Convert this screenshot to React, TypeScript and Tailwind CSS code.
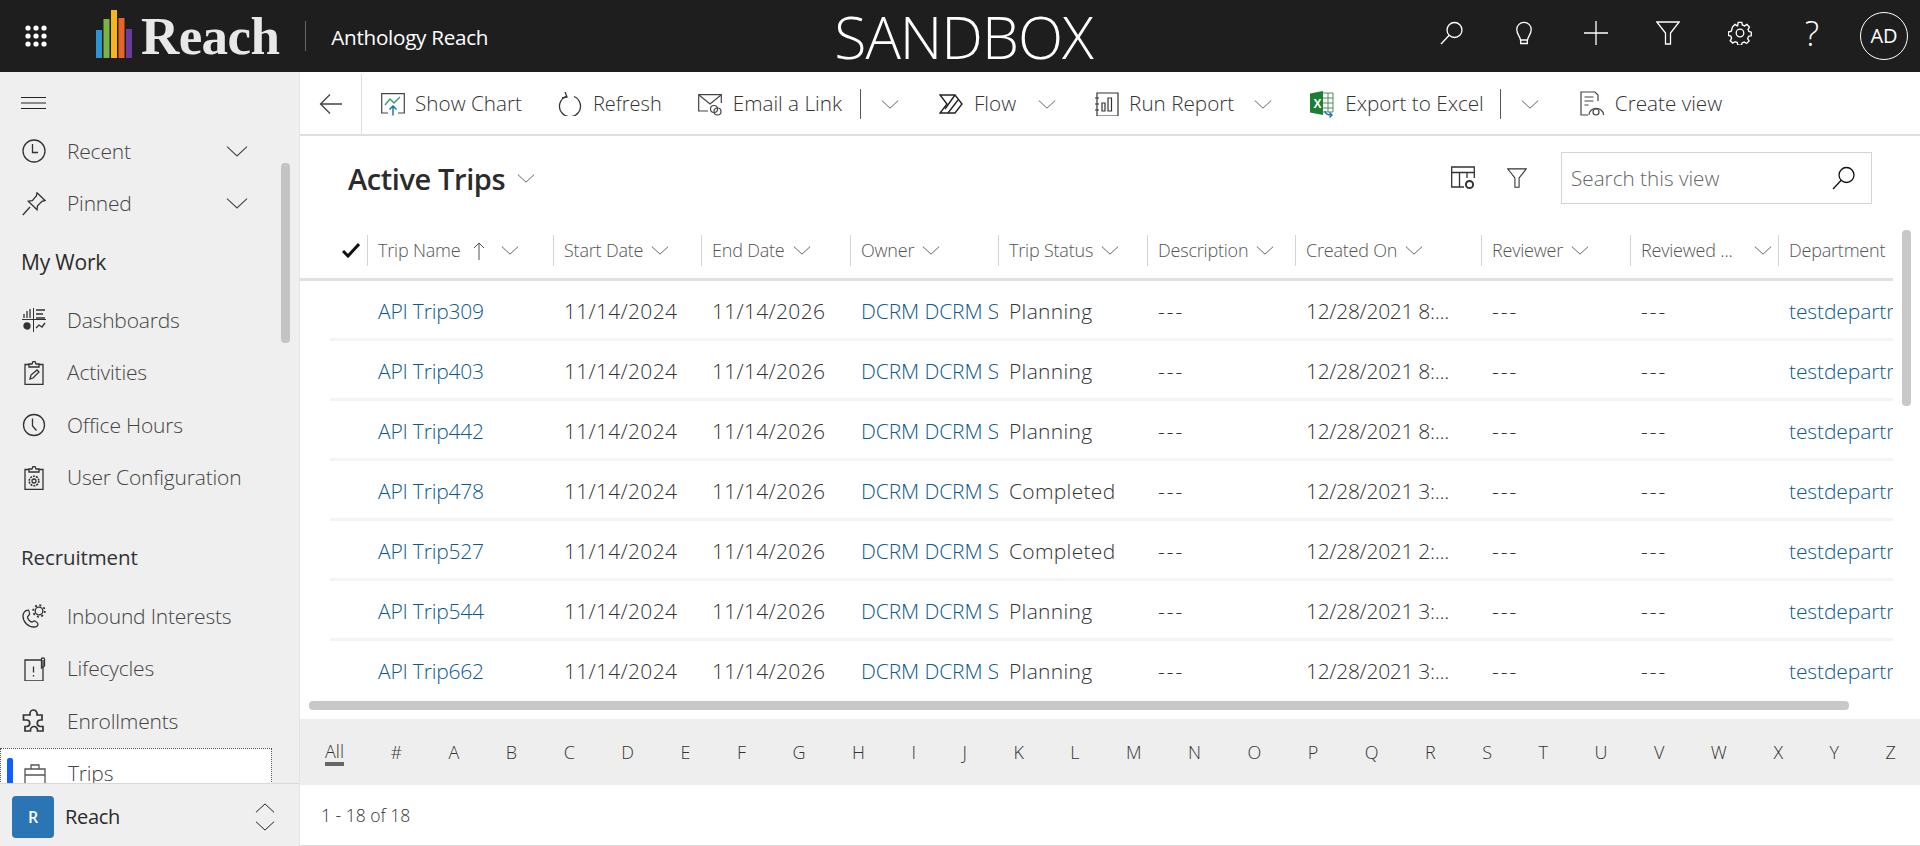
import type { ReactNode } from 'react';

const FONT = "font-['Open_Sans','Noto_Sans',sans-serif]";

type IconProps = { className?: string };

function Line({ size = 24, className, children }: { size?: number; className?: string; children: ReactNode }) {
  return (
    <svg
      width={size}
      height={size}
      viewBox="0 0 24 24"
      fill="none"
      stroke="currentColor"
      strokeWidth={1.3}
      className={className}
    >
      {children}
    </svg>
  );
}

function Chevron({ className = '', w = 22 }: { className?: string; w?: number }) {
  return (
    <svg width={w} height={w / 2} viewBox="0 0 22 11" fill="none" stroke="currentColor" strokeWidth={1.1} className={className}>
      <path d="M1 .7 11 10 21 .7" />
    </svg>
  );
}

function Waffle() {
  const dots = [4, 12, 20];
  return (
    <svg width={24} height={24} viewBox="0 0 24 24" fill="#fff">
      {dots.map((y) => dots.map((x) => <circle key={`${x}-${y}`} cx={x} cy={y} r={2.6} />))}
    </svg>
  );
}

function LogoBars() {
  return (
    <svg width={36} height={48} viewBox="0 0 36 48">
      <rect x={0} y={20} width={6} height={28} fill="#2c94cf" />
      <rect x={7.5} y={9} width={6} height={39} fill="#78b543" />
      <rect x={15} y={0} width={6} height={48} fill="#f7b51d" />
      <rect x={22.5} y={8} width={6} height={40} fill="#ea6327" />
      <rect x={30} y={19} width={6} height={29} fill="#6b3d98" />
    </svg>
  );
}

const SearchIcon = ({ className }: IconProps) => (
  <Line className={className}>
    <circle cx={14.5} cy={9} r={7.5} />
    <path d="M9.2 14.3 1 23" />
  </Line>
);
const Bulb = () => (
  <Line>
    <path d="M8.5 19C8 15 4.8 13.5 4.8 8.5a7.2 7.2 0 0 1 14.4 0c0 5-3.2 6.5-3.7 10.5Z" />
    <path d="M8.7 19v3.5h6.6V19" />
  </Line>
);
const PlusIcon = () => (
  <Line>
    <path d="M12 0v24M0 12h24" />
  </Line>
);
const Funnel = ({ size = 24 }: { size?: number }) => (
  <Line size={size}>
    <path d="M.8 1h22.4L14.5 12v11h-5V12Z" />
  </Line>
);
const Gear = () => (
  <Line>
    <circle cx={12} cy={12} r={3.8} />
    <path d="M10 1h4l.6 3 2.500 1 2.600-1.600 2.800 2.800-1.600 2.600 1 2.400 2.600.8v4l-3 .6-1 2.500 1.600 2.600-2.800 2.800-2.600-1.600-2.400 1-.7 2.600h-4l-.6-3-2.500-1-2.600 1.600-2.800-2.800 1.600-2.600-1-2.400-2.600-.7v-4l3-.6 1-2.500L3.600 6.200 6.400 3.400 9 5l.4-.2Z" transform="translate(1.200 .4) scale(.9)" strokeWidth={1.5} />
  </Line>
);
const Back = () => (
  <Line>
    <path d="M23 12H2M11 2.500 1.500 12 11 21.500" />
  </Line>
);

const ShowChartIcon = () => (
  <svg width={24} height={24} viewBox="0 0 24 24" fill="none" strokeWidth={1.2}>
    <path d="M7 21H.7V1.700h22.600V21H17" stroke="#444" />
    <path d="M4 13 9 7l4 4 6-6" stroke="#2f9e6e" strokeWidth={1.4} />
    <path d="M12 23.500V14M8.500 17.500 12 14l3.500 3.500" stroke="#0f6cbd" strokeWidth={1.4} />
  </svg>
);
const RefreshIcon = () => (
  <Line>
    <path d="M8 4.500a10.500 10.500 0 1 0 8 0" />
    <path d="M7 0l2 5-5 1" />
  </Line>
);
const EmailIcon = () => (
  <svg width={24} height={24} viewBox="0 0 24 24" fill="none" stroke="#444" strokeWidth={1.2}>
    <path d="M10 19H.7V2.700h22.600V11" />
    <path d="M1 3l11 9 11-9" />
    <circle cx={16} cy={17} r={3.500} />
    <circle cx={19.500} cy={19.500} r={3.500} />
  </svg>
);
const FlowIcon = () => (
  <svg width={24} height={24} viewBox="0 0 24 24" fill="none" stroke="#222" strokeWidth={1.4}>
    <path d="M1 3h15l7 9-7 9H1l7-9Z" />
    <path d="M16 3 6 17M19 8 9 21" />
  </svg>
);
const ReportIcon = () => (
  <svg width={24} height={24} viewBox="0 0 24 24" fill="none" stroke="#333" strokeWidth={1.2}>
    <path d="M2 1h21v23H2z" />
    <path d="M7 11h3v8H7zM13 6h3.500v13H13z" />
    <path d="M0 6h4M0 12h4M0 18h4" />
  </svg>
);
const ExcelIcon = () => (
  <svg width={24} height={28} viewBox="0 0 24 28" fill="none">
    <path d="M0 3.500 13 1v24L0 22.500Z" fill="#1e7e34" />
    <path d="M13 3h10v19H13" fill="#fff" stroke="#4b8f5e" />
    <path d="M13 8h10M13 13h10M13 18h10M18 3v19" stroke="#4b8f5e" />
    <text x={3.500} y={18} fontSize={12} fontWeight={700} fill="#fff" fontFamily="Liberation Sans">X</text>
    <path d="M15 21c0 3 2 4 7 4m-2.500-2.500L22 25l-2.500 2.500" stroke="#1f6fb5" strokeWidth={1.4} />
  </svg>
);
const CreateViewIcon = () => (
  <svg width={24} height={26} viewBox="0 0 24 26" fill="none" stroke="#444" strokeWidth={1.2}>
    <path d="M8 24H1V1h14l3 3v6" />
    <path d="M4.500 6h9M4.500 10h9M4.500 14h4" />
    <path d="M9 24c.5-9 14-9 14.500 0" />
    <circle cx={16} cy={21} r={3} />
  </svg>
);
const ViewSettingsIcon = () => (
  <svg width={24} height={24} viewBox="0 0 24 24" fill="none" stroke="#333" strokeWidth={1.3}>
    <path d="M13 21H.7V1h22.600v11" />
    <path d="M1 6.500h22M8.500 6.500V21M16 6.500V12" />
    <circle cx={18.500} cy={18.500} r={3.600} strokeWidth={2} />
  </svg>
);

const ClockIcon = () => (
  <Line>
    <circle cx={12} cy={12} r={11} />
    <path d="M10.500 5v8.500H16" />
  </Line>
);
const OfficeClockIcon = () => (
  <Line>
    <circle cx={12} cy={12} r={10.500} />
    <path d="M10.500 5.500V13l4 4.500" />
  </Line>
);
const PinIcon = () => (
  <Line>
    <path d="M15 .8 23 8.500l-3 .8-4.500 4.500-.5 4-3-3-2.700-2.600-3-3 4-.6L14.300 4Z" />
    <path d="M8 15 .8 23" />
  </Line>
);
const DashboardIcon = () => (
  <Line>
    <path d="M11.500 0v24M0 11.500h24" strokeWidth={1} />
    <path d="M2 10V6M5 10V3M8 10V1M14 2h9M14 6h7M14 10h9" />
    <circle cx={5} cy={18} r={3} fill="currentColor" />
    <path d="M14 20l3-3 3 2 3-4" />
  </Line>
);
const ActivitiesIcon = () => (
  <Line>
    <path d="M7 3.500H3v20h18v-20h-4" />
    <path d="M7 6V3h3l1-2.500h2L14 3h3v3Z" />
    <path d="m8 18 1-4 6-5 2 2-6 6Z" />
  </Line>
);
const UserConfigIcon = () => (
  <Line>
    <path d="M7 3.500H3v20h18v-20h-4" />
    <path d="M7 6V3h3l1-2.500h2L14 3h3v3Z" />
    <circle cx={12} cy={15} r={2} />
    <circle cx={12} cy={15} r={4.800} strokeDasharray="2 1" strokeWidth={1.6} />
  </Line>
);
const InboundIcon = () => (
  <Line>
    <path d="M6.500 6C3 6 1 9 1 12c0 6 5 11 11 11 3 0 4-1.500 4-3 0-1-1.500-2-3-3-1.500-.5-2 1-3 1-2 0-4.500-3-4.500-5 0-1 2-1.500 2-3 0-1.500-.7-4-1.500-4Z" />
    <circle cx={17} cy={7} r={3.800} />
    <circle cx={17} cy={7} r={5.800} strokeDasharray="2 2.500" strokeWidth={1.8} />
  </Line>
);
const LifecyclesIcon = () => (
  <Line>
    <path d="M19 3H3v21h18V3" />
    <path d="M19.500 11V2c0-1.500 3-1.500 3 0v7Z" />
    <path d="M11.500 9.500v6M11.500 18v1.500" />
  </Line>
);
const PuzzleIcon = () => (
  <Line>
    <path
      strokeWidth={1.7}
      d="M8 4.500a3.500 3.500 0 0 1 7 0V6h5v5h-1.500a3 3 0 0 0 0 6.500H21V22h-5.500v-1a3.500 3.500 0 0 0-7 0v1H3v-4.500h1.500a3 3 0 0 0 0-6.500H1.500V6H8Z"
    />
  </Line>
);
const BriefcaseIcon = () => (
  <Line>
    <path d="M2 7h20v15H2zM2 13h20M8 7V3h8v4" />
  </Line>
);

const NAV_A = [
  { label: 'Dashboards', icon: <DashboardIcon /> },
  { label: 'Activities', icon: <ActivitiesIcon /> },
  { label: 'Office Hours', icon: <OfficeClockIcon /> },
  { label: 'User Configuration', icon: <UserConfigIcon /> },
];
const NAV_B = [
  { label: 'Inbound Interests', icon: <InboundIcon /> },
  { label: 'Lifecycles', icon: <LifecyclesIcon /> },
  { label: 'Enrollments', icon: <PuzzleIcon /> },
];

function NavItem({ icon, label, chevron }: { icon: ReactNode; label: string; chevron?: boolean }) {
  return (
    <div className="flex h-[52.5px] items-center pl-[22px] text-[#444]">
      <span className="flex w-[45px] shrink-0 text-[#333]">{icon}</span>
      <span className="text-[21px] font-light tracking-[-0.2px]">{label}</span>
      {chevron && <Chevron className="ml-auto mr-[50px] w-[24px]" />}
    </div>
  );
}

function Sidebar() {
  return (
    <aside className="relative flex w-[300px] shrink-0 flex-col overflow-hidden border-r border-[#e4e4e4] bg-[#efefef]">
      <div className="h-[711px] shrink-0 overflow-hidden">
        <div className="flex h-[53px] items-center pl-[21px] pt-[9px] text-[#222]">
          <svg width={25} height={12} viewBox="0 0 25 12" stroke="currentColor" strokeWidth={1}>
            <path d="M0 .5h25M0 6h25M0 11.500h25" />
          </svg>
        </div>
        <NavItem icon={<ClockIcon />} label="Recent" chevron />
        <NavItem icon={<PinIcon />} label="Pinned" chevron />
        <div className="flex h-[64px] items-center pl-[21px] pt-[1px] text-[21px] font-medium tracking-[-0.2px] text-[#2b2b2b]">My Work</div>
        {NAV_A.map((n) => (
          <NavItem key={n.label} {...n} />
        ))}
        <div className="flex h-[86px] items-start pl-[21px] pt-[40px] text-[20.5px] font-medium leading-[26px] tracking-[-0.1px] text-[#333]">
          Recruitment
        </div>
        {NAV_B.map((n) => (
          <NavItem key={n.label} {...n} />
        ))}
        <div className="relative flex h-[60px] w-[272px] items-start border border-dotted border-[#555] bg-white pl-[22px] pt-[11px] text-[#444]">
          <span className="absolute left-[6px] top-[9px] h-[40px] w-[6px] rounded-[2px] bg-[#0f5fff]" />
          <span className="mt-[2px] flex w-[45px] shrink-0 text-[#555]">
            <BriefcaseIcon />
          </span>
          <span className="text-[21px] font-light leading-[26px] tracking-[-0.2px]">Trips</span>
        </div>
      </div>
      <div className="flex h-[63px] shrink-0 items-center border-t border-[#d9d9d9] pl-[12px] pr-[24px] pt-[3px]">
        <span className="flex h-[42px] w-[42px] items-center justify-center rounded-[4px] bg-[#2b75b5] text-[16px] font-semibold text-white">
          R
        </span>
        <span className="ml-[11px] text-[20px] font-medium tracking-[-0.3px] text-[#2b2b2b]">Reach</span>
        <span className="ml-auto flex flex-col gap-[8px] text-[#222]">
          <Chevron className="rotate-180" w={20} />
          <Chevron w={20} />
        </span>
      </div>
      <span className="absolute left-[281px] top-[91px] h-[180px] w-[9px] rounded-[4px] bg-[#c4c4c4]" />
    </aside>
  );
}

function TopBar() {
  return (
    <header className="flex h-[72px] shrink-0 items-center bg-[#1e1e1e] text-white">
      <span className="ml-[24px] flex">
        <Waffle />
      </span>
      <span className="ml-[48px] mb-[4px] flex">
        <LogoBars />
      </span>
      <span className="ml-[9px] font-['Liberation_Serif',serif] text-[53px] font-bold leading-none tracking-[-0.6px] text-[#e8e8e8]">
        Reach
      </span>
      <span className="ml-[26px] h-[30px] w-px bg-[#666]" />
      <span className="ml-[25px] pt-[3px] text-[20.7px] tracking-[-0.3px]">Anthology Reach</span>
      <span className="ml-[346px] text-[59px] font-light leading-none tracking-[-1px]">SANDBOX</span>
      <div className="ml-auto flex items-center pr-[12px]">
        {[<SearchIcon key="s" />, <Bulb key="b" />, <PlusIcon key="p" />, <Funnel key="f" />, <Gear key="g" />].map((icon, i) => (
          <span key={i} className="flex h-[72px] w-[72px] items-center justify-center pb-[6px]">
            {icon}
          </span>
        ))}
        <span className="flex h-[72px] w-[72px] items-center justify-center pb-[6px] text-[34px] font-light leading-none">?</span>
        <span className="ml-[12px] flex h-[48px] w-[48px] items-center justify-center rounded-full border border-white text-[20px]">AD</span>
      </div>
    </header>
  );
}

function CmdLabel({ children }: { children: ReactNode }) {
  return <span className="text-[20.7px] font-light text-[#333]">{children}</span>;
}

function CommandBar() {
  return (
    <div className="flex h-[64px] shrink-0 items-center border-b-2 border-[#dedede] pt-[2px]">
      <div className="flex h-full w-[62px] shrink-0 items-center justify-center border-r border-[#dedede] text-[#444]">
        <Back />
      </div>
      <span className="ml-[19px] flex">
        <ShowChartIcon />
      </span>
      <span className="ml-[10px]">
        <CmdLabel>Show Chart</CmdLabel>
      </span>
      <span className="ml-[36px] flex text-[#333]">
        <RefreshIcon />
      </span>
      <span className="ml-[11px]">
        <span className="text-[20px] font-light text-[#333]">Refresh</span>
      </span>
      <span className="ml-[36px] flex">
        <EmailIcon />
      </span>
      <span className="ml-[11px]">
        <CmdLabel>Email a Link</CmdLabel>
      </span>
      <span className="ml-[18px] h-[30px] w-px bg-[#555]" />
      <Chevron className="ml-[20px] text-[#555]" w={18} />
      <span className="ml-[40px] flex">
        <FlowIcon />
      </span>
      <span className="ml-[11px]">
        <CmdLabel>Flow</CmdLabel>
      </span>
      <Chevron className="ml-[22px] text-[#555]" w={18} />
      <span className="ml-[39px] flex">
        <ReportIcon />
      </span>
      <span className="ml-[10px]">
        <CmdLabel>Run Report</CmdLabel>
      </span>
      <Chevron className="ml-[20px] text-[#555]" w={18} />
      <span className="ml-[38px] flex">
        <ExcelIcon />
      </span>
      <span className="ml-[11px]">
        <CmdLabel>Export to Excel</CmdLabel>
      </span>
      <span className="ml-[16px] h-[30px] w-px bg-[#555]" />
      <Chevron className="ml-[20px] text-[#555]" w={18} />
      <span className="ml-[41px] flex">
        <CreateViewIcon />
      </span>
      <span className="ml-[11px]">
        <CmdLabel>Create view</CmdLabel>
      </span>
    </div>
  );
}

const COLS = [
  { name: 'Trip Name', w: 'w-[186px]' },
  { name: 'Start Date', w: 'w-[148px]' },
  { name: 'End Date', w: 'w-[149px]' },
  { name: 'Owner', w: 'w-[148px]' },
  { name: 'Trip Status', w: 'w-[149px]' },
  { name: 'Description', w: 'w-[148px]' },
  { name: 'Created On', w: 'w-[186px]' },
  { name: 'Reviewer', w: 'w-[149px]' },
  { name: 'Reviewed ...', w: 'w-[148px]' },
  { name: 'Department', w: 'w-[140px]' },
];

const ROWS = [
  ['API Trip309', 'Planning', '12/28/2021 8:...'],
  ['API Trip403', 'Planning', '12/28/2021 8:...'],
  ['API Trip442', 'Planning', '12/28/2021 8:...'],
  ['API Trip478', 'Completed', '12/28/2021 3:...'],
  ['API Trip527', 'Completed', '12/28/2021 2:...'],
  ['API Trip544', 'Planning', '12/28/2021 3:...'],
  ['API Trip662', 'Planning', '12/28/2021 3:...'],
];

function Cell({ w, link, extra = 'tracking-[0.3px]', children }: { w: string; link?: boolean; extra?: string; children: ReactNode }) {
  return (
    <div
      className={`${w} ${extra} shrink-0 overflow-hidden whitespace-nowrap pl-[11px] text-[21px] font-light ${
        link ? 'text-[#0b5a90]' : 'text-[#333]'
      }`}
    >
      {children}
    </div>
  );
}

const Dash = () => <span className="tracking-[2px]">---</span>;

function Grid() {
  return (
    <div className="w-[1593px] overflow-hidden">
      <div className="flex h-[49px] border-b-[3px] border-[#e0e0e0] pt-[3px]">
        <div className="flex h-[31px] w-[67px] shrink-0 items-center justify-end pr-[7px]">
          <svg width={18} height={15} viewBox="0 0 18 15" fill="none" stroke="#111" strokeWidth={3}>
            <path d="m1 8 5 5L17 1" />
          </svg>
        </div>
        {COLS.map((c, i) => (
          <div
            key={c.name}
            className={`${c.w} flex h-[31px] shrink-0 items-center whitespace-nowrap border-l border-[#d4d4d4] pl-[10px] text-[18px] font-light tracking-[-0.2px] text-[#555]`}
          >
            <span>{c.name}</span>
            {i === 0 && (
              <svg width={12} height={18} viewBox="0 0 12 18" fill="none" stroke="#555" strokeWidth={1} className="ml-[13px]">
                <path d="M6 18V1M1 6l5-5 5 5" />
              </svg>
            )}
            {i < 9 && (
              <Chevron
                className={`text-[#555] ${i === 8 ? 'ml-auto mr-[6px]' : i === 0 ? 'ml-[16px]' : 'ml-[8px]'}`}
                w={18}
              />
            )}
          </div>
        ))}
      </div>
      {ROWS.map(([name, status, created], r) => (
        <div
          key={name}
          className={`ml-[30px] flex h-[60px] items-center ${r < 6 ? 'border-b-[3px] border-[#f4f4f4] pt-[4px]' : 'pt-[2px]'}`}
        >
          <div className="w-[37px] shrink-0" />
          <Cell w="w-[186px]" link extra="tracking-[-0.2px]">{name}</Cell>
          <Cell w="w-[148px]">11/14/2024</Cell>
          <Cell w="w-[149px]">11/14/2026</Cell>
          <Cell w="w-[148px]" link extra="tracking-[-0.1px]">DCRM DCRM Service</Cell>
          <Cell w="w-[149px]">{status}</Cell>
          <Cell w="w-[148px]"><Dash /></Cell>
          <Cell w="w-[186px]" extra="tracking-[-0.3px]">{created}</Cell>
          <Cell w="w-[149px]"><Dash /></Cell>
          <Cell w="w-[148px]"><Dash /></Cell>
          <Cell w="w-[140px]" link extra="tracking-[-0.1px]">testdepartment</Cell>
        </div>
      ))}
    </div>
  );
}

const LETTERS = ['All', '#', ...'ABCDEFGHIJKLMNOPQRSTUVWXYZ'];

function Main() {
  return (
    <main className="relative flex min-w-0 flex-1 flex-col bg-white">
      <CommandBar />
      <div className="flex h-[96px] shrink-0 items-start pl-[48px] pr-[48px] pt-[16px]">
        <div className="flex h-[52px] items-center">
          <span className="text-[29px] font-semibold leading-none tracking-[-0.4px] text-[#2b2b2b]">Active Trips</span>
          <Chevron className="ml-[12px] text-[#555]" w={18} />
        </div>
        <div className="ml-auto flex h-[52px] items-center">
          <ViewSettingsIcon />
          <span className="ml-[32px] flex text-[#333]">
            <Funnel size={20} />
          </span>
          <div className="ml-[34px] flex h-[52px] w-[311px] items-center justify-between border border-[#d4d4d4] pl-[9px] pr-[15px]">
            <span className="pt-[2px] text-[20.7px] font-light text-[#666]">Search this view</span>
            <SearchIcon className="text-[#111]" />
          </div>
        </div>
      </div>
      <Grid />
      <div className="h-[18px] shrink-0 pl-[9px]">
        <div className="h-[9px] w-[1540px] rounded-[4px] bg-[#c8c8c8]" />
      </div>
      <div className="flex h-[66px] shrink-0 items-center justify-between bg-[#eeeeee] pl-[25px] pr-[24px] pt-[1px] text-[18px] font-light text-[#333]">
        {LETTERS.map((l) => (
          <span key={l} className={l === 'All' ? 'border-b-[4px] border-[#666] leading-[22px]' : ''}>
            {l}
          </span>
        ))}
      </div>
      <div className="flex h-[61px] shrink-0 items-center border-b border-[#d9d9d9] pl-[21px] text-[17.5px] font-light text-[#333]">
        1 - 18 of 18
      </div>
      <span className="absolute left-[1602px] top-[158px] h-[176px] w-[9px] rounded-[4px] bg-[#c8c8c8]" />
    </main>
  );
}

export default function App() {
  return (
    <div className={`${FONT} flex h-[846px] w-[1920px] flex-col overflow-hidden bg-white`}>
      <TopBar />
      <div className="flex min-h-0 flex-1">
        <Sidebar />
        <Main />
      </div>
    </div>
  );
}
